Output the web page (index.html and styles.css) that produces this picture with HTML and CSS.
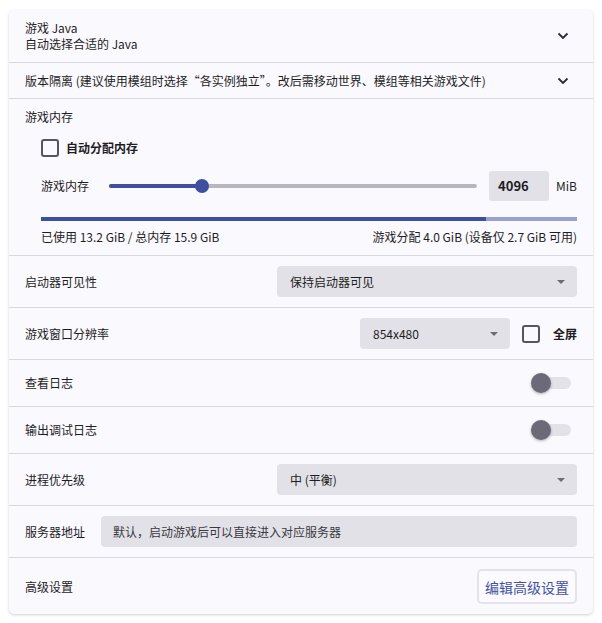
FILE: index.html
```html
<!DOCTYPE html>
<html lang="zh-CN">
<head>
    <meta charset="UTF-8">
    <meta name="viewport" content="width=device-width, initial-scale=1.0">
    <title>游戏设置</title>
    <link rel="stylesheet" href="styles.css">
</head>
<body>

<div class="card">
    <div class="row">
        <div class="stack">
            <span>游戏 Java</span>
            <span>自动选择合适的 Java</span>
        </div>
        <svg class="chevron" width="12" height="8" viewBox="0 0 12 8"><path d="M1.5 1.5 L6 6 L10.5 1.5" fill="none" stroke="#2a2933" stroke-width="1.8"/></svg>
    </div>

    <div class="row slim">
        <span>版本隔离 (建议使用模组时选择“各实例独立”。改后需移动世界、模组等相关游戏文件)</span>
        <svg class="chevron" width="12" height="8" viewBox="0 0 12 8"><path d="M1.5 1.5 L6 6 L10.5 1.5" fill="none" stroke="#2a2933" stroke-width="1.8"/></svg>
    </div>

    <div class="row memory">
        <span>游戏内存</span>
        <label class="check indent">
            <span class="box"></span>
            <b>自动分配内存</b>
        </label>
        <div class="slider-row indent">
            <span>游戏内存</span>
            <div class="slider">
                <div class="slider-fill" style="width: 25.4%"></div>
                <div class="slider-thumb" style="left: 25.4%"></div>
            </div>
            <div class="num">4096</div>
            <span class="unit">MiB</span>
        </div>
        <div class="usage indent">
            <div class="usage-fill" style="width: 83%"></div>
        </div>
        <div class="usage-text indent">
            <span>已使用 13.2 GiB / 总内存 15.9 GiB</span>
            <span>游戏分配 4.0 GiB (设备仅 2.7 GiB 可用)</span>
        </div>
    </div>

    <div class="row">
        <span>启动器可见性</span>
        <div class="select wide">
            <span>保持启动器可见</span>
            <span class="caret"></span>
        </div>
    </div>

    <div class="row">
        <span>游戏窗口分辨率</span>
        <div class="controls">
            <div class="select small">
                <span>854x480</span>
                <span class="caret"></span>
            </div>
            <label class="check">
                <span class="box"></span>
                <b>全屏</b>
            </label>
        </div>
    </div>

    <div class="row toggle-row">
        <span>查看日志</span>
        <div class="toggle"><span class="knob"></span></div>
    </div>

    <div class="row toggle-row">
        <span>输出调试日志</span>
        <div class="toggle"><span class="knob"></span></div>
    </div>

    <div class="row">
        <span>进程优先级</span>
        <div class="select wide">
            <span>中 (平衡)</span>
            <span class="caret"></span>
        </div>
    </div>

    <div class="row">
        <span class="nowrap">服务器地址</span>
        <div class="field">默认，启动游戏后可以直接进入对应服务器</div>
    </div>

    <div class="row last">
        <span>高级设置</span>
        <button class="btn">编辑高级设置</button>
    </div>
</div>

</body>
</html>
```

FILE: styles.css
```css
body { margin: 0; padding: 10px 9px; background: #ffffff; font-family: "Segoe UI", "Noto Sans CJK SC", "Noto Sans", sans-serif; font-size: 12px; line-height: 16px; color: #1e1d24; }
.card { background: #faf9fe; border-radius: 5px; box-shadow: 0 1px 3px rgba(0,0,0,0.18); overflow: hidden; }
.row { display: flex; align-items: center; justify-content: space-between; padding: 10px 16px; border-bottom: 1px solid #d9d7df; min-height: 16px; }
.row.slim { padding-bottom: 9px; }
.row.last { border-bottom: none; padding: 11px 16px 10px; }
.stack { display: flex; flex-direction: column; }
.chevron { margin-right: 8px; }
.nowrap { white-space: nowrap; margin-right: 16px; }

.memory { display: block; padding: 10px 16px 10px; }
.indent { margin-left: 16px; }
.check { display: flex; align-items: center; gap: 7px; }
.memory .check { margin-top: 14px; }
.box { width: 14px; height: 14px; border: 2px solid #55545f; border-radius: 3px; }
.check b { font-weight: bold; }

.slider-row { display: flex; align-items: center; margin-top: 14px; height: 30px; }
.slider { position: relative; flex: 1; height: 4px; background: #b9b7be; border-radius: 2px; margin: 0 12px 0 20px; }
.slider-fill { height: 4px; background: #3f4fa0; border-radius: 2px; }
.slider-thumb { position: absolute; top: -5px; width: 14px; height: 14px; margin-left: -7px; border-radius: 50%; background: #3f4fa0; }
.num { width: 60px; height: 30px; box-sizing: border-box; padding-left: 9px; display: flex; align-items: center; background: #e2e1e7; border-radius: 3px; font-weight: bold; font-size: 13px; }
.unit { margin-left: 7px; }

.usage { margin-top: 16px; height: 4px; background: #9aa1cf; }
.usage-fill { height: 4px; background: #3f4fa0; }
.usage-text { display: flex; justify-content: space-between; margin-top: 8px; }

.select { height: 31px; box-sizing: border-box; display: flex; align-items: center; justify-content: space-between; padding: 0 12px 0 13px; background: #e2e1e7; border-radius: 4px; }
.select.wide { width: 300px; }
.select.small { width: 150px; }
.caret { width: 0; height: 0; border-left: 4px solid transparent; border-right: 4px solid transparent; border-top: 4px solid #6d6c76; }
.controls { display: flex; align-items: center; gap: 12px; }
.controls .check { gap: 13px; }

.toggle-row { padding: 10px 16px; }
.toggle { position: relative; width: 38px; height: 12px; margin: 7px 6px 7px 0; background: #e3e2e8; border-radius: 6px; }
.knob { position: absolute; left: -2px; top: -4px; width: 20px; height: 20px; border-radius: 50%; background: #6c6a78; box-shadow: 0 1px 3px rgba(0,0,0,0.3); }

.field { flex: 1; height: 31px; box-sizing: border-box; display: flex; align-items: center; padding-left: 12px; background: #e2e1e7; border-radius: 4px; color: #3a3942; }

.btn { height: 35px; width: 100px; border: 2px solid #e4e3ea; border-radius: 5px; background: #fbfaff; color: #4452a0; font-family: inherit; font-size: 14px; padding: 0; }
```
